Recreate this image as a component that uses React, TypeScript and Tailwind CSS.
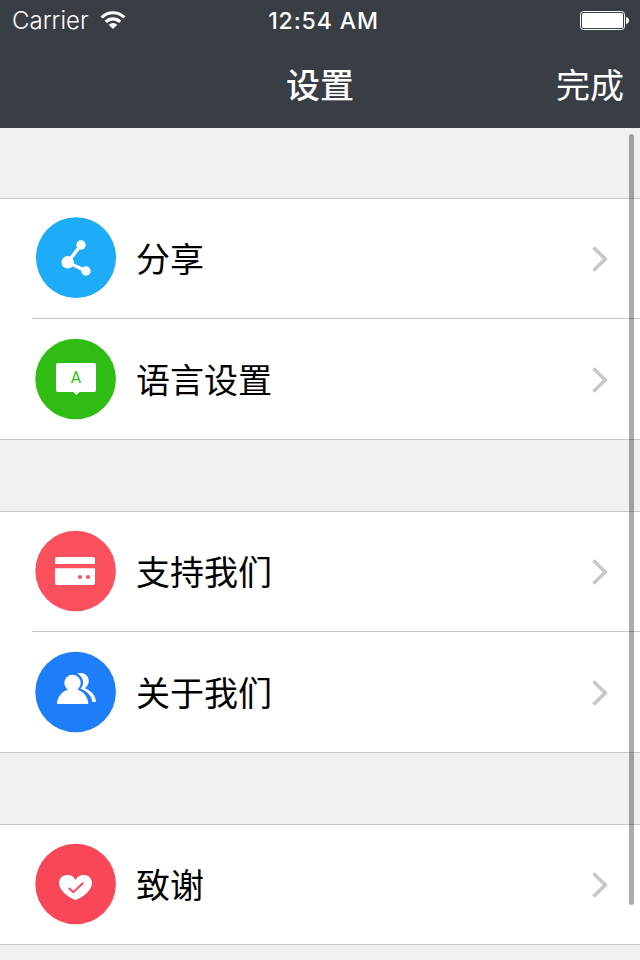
import type { ReactNode } from 'react'
import clsx from 'clsx'

type Item = {
  title: string
  icon: ReactNode
}

const shareIcon = (
  <>
    <ellipse cx="41" cy="40.6" rx="40.1" ry="40.4" fill="#1eabf7" />
    <g fill="#fff">
      <path d="M46 28 32.7 45.3 51 54" fill="none" stroke="#fff" strokeWidth="3.4" />
      <circle cx="46" cy="28" r="4.7" />
      <circle cx="32.7" cy="45.3" r="6.2" />
      <circle cx="51" cy="54" r="4.7" />
    </g>
  </>
)

const languageIcon = (
  <>
    <circle cx="40.6" cy="41" r="40.3" fill="#2fbd13" />
    <path
      d="M23 25h36a2 2 0 0 1 2 2v25a2 2 0 0 1-2 2H44.6l-3.2 2.9L38.2 54H23a2 2 0 0 1-2-2V27a2 2 0 0 1 2-2Z"
      fill="#fff"
    />
    <text x="41" y="45" textAnchor="middle" fill="#2fbd13" fontSize="16" fontFamily="Roboto, sans-serif">
      A
    </text>
  </>
)

const supportIcon = (
  <>
    <circle cx="40.6" cy="41" r="40.3" fill="#fb515f" />
    <path d="M22 27h36a2 2 0 0 1 2 2v5H20v-5a2 2 0 0 1 2-2ZM20 38.2h40V53a2 2 0 0 1-2 2H22a2 2 0 0 1-2-2Z" fill="#fff" />
    <circle cx="45" cy="47" r="2.1" fill="#fb515f" />
    <circle cx="53" cy="47" r="2.1" fill="#fb515f" />
  </>
)

const aboutIcon = (
  <>
    <circle cx="40.6" cy="41" r="40.3" fill="#1e7df8" />
    <g fill="#fff">
      <circle cx="37.5" cy="32" r="8.2" />
      <path d="M22 53c0-6.500 4.500-12.300 11-14.500V36h9.400v2.500C49 40.700 53.300 46.500 53.300 53Z" />
      <path d="M41.800 22.600C48.500 20.500 53.700 24.200 53.700 30c0 3-1.400 5.500-3.900 7.300C56.500 40 61 45 61 51h-3.700C56.600 45 52.500 40.200 45.500 37.700c1.800-1.800 2.600-3.700 2.600-6.200 0-4-2.400-7.500-6.300-8.900Z" />
    </g>
  </>
)

const thanksIcon = (
  <>
    <circle cx="40.6" cy="41" r="40.3" fill="#f94757" />
    <path
      d="M40.600 37C39 33.600 36 32 32.500 32 27.500 32 24 35.500 24 40c0 6 7 13.500 16.600 16.900C50 53.500 57 46 57 40c0-4.500-3.500-8-8.400-8-3.500 0-6.500 1.600-8 5Z"
      fill="#fff"
    />
    <path d="m33.800 45 4.500 4.200 10-9.500" fill="none" stroke="#f94757" strokeWidth="2" />
  </>
)

const sections: Item[][] = [
  [
    { title: '分享', icon: shareIcon },
    { title: '语言设置', icon: languageIcon },
  ],
  [
    { title: '支持我们', icon: supportIcon },
    { title: '关于我们', icon: aboutIcon },
  ],
  [{ title: '致谢', icon: thanksIcon }],
]

function StatusBar() {
  return (
    <div className="grid h-10 grid-cols-3 items-center pl-3 pr-[11px]">
      <div className="flex items-center gap-2.5">
        <span className="w-[78px] whitespace-nowrap pt-0.5 text-2xl font-light leading-8">Carrier</span>
        <svg width="26" height="20" viewBox="0 0 26 20" fill="none" stroke="#fff" strokeWidth="3.200">
          <path d="M1.600 7.500a16 16 0 0 1 22.800 0M5.800 11.900a10.200 10.200 0 0 1 14.400 0" />
          <path d="M13 19l-4.300-4.200a6 6 0 0 1 8.600 0Z" fill="#fff" stroke="none" />
        </svg>
      </div>
      <span className="whitespace-nowrap pl-1.5 pt-0.5 text-center text-[23px] font-medium leading-8 tracking-[0.9px]">12:54 AM</span>
      <svg className="justify-self-end" width="49" height="20" viewBox="0 0 49 20">
        <rect x="0.500" y="1.500" width="44" height="18" rx="3" fill="none" stroke="#fff" />
        <rect x="2" y="3" width="41" height="15" rx="1.500" fill="#fff" />
        <path d="M46 7c2 .4 3 1.800 3 3.500s-1 3.100-3 3.500Z" fill="#fff" />
      </svg>
    </div>
  )
}

function Row({ item, first, last }: { item: Item; first: boolean; last: boolean }) {
  return (
    <li className="pl-8">
      <div
        className={clsx(
          'flex items-center pl-[3px] pr-8',
          first && 'pb-px',
          first && last ? 'h-[119px]' : 'h-[120px]',
          !last && 'border-b border-[#c8c7cc]',
        )}
      >
        <svg width="82" height="82" viewBox="0 0 82 82">
          {item.icon}
        </svg>
        <span className="ml-[19px] flex-1 pt-1 text-[34px] leading-10">{item.title}</span>
        <svg className="mt-0.5" width="16" height="26" viewBox="0 0 16 26" fill="none" stroke="#c7c7cc" strokeWidth="3.600">
          <path d="M1.500 1.500 13.300 13 1.500 24.500" />
        </svg>
      </div>
    </li>
  )
}

export default function App() {
  return (
    <div className="relative h-[960px] w-[640px] overflow-hidden bg-[#efeff4] font-[Inter,'Noto_Sans_CJK_SC',sans-serif] text-black">
      <header className="h-32 bg-[#393d44] text-white">
        <StatusBar />
        <nav className="grid h-[88px] grid-cols-3 items-center px-4 pt-0.5 text-[34px]">
          <h1 className="col-start-2 text-center font-medium">设置</h1>
          <button className="justify-self-end">完成</button>
        </nav>
      </header>

      <main className="flex flex-col gap-[71px] pt-[70px]">
        {sections.map((items) => (
          <ul key={items[0].title} className="border-y border-[#c8c7cc] bg-white">
            {items.map((item, i) => (
              <Row key={item.title} item={item} first={i === 0} last={i === items.length - 1} />
            ))}
          </ul>
        ))}
      </main>

      {/* Scroll indicator */}
      <div className="absolute right-1.5 top-[134px] h-[771px] w-[5px] rounded-full bg-black/33" />
    </div>
  )
}
